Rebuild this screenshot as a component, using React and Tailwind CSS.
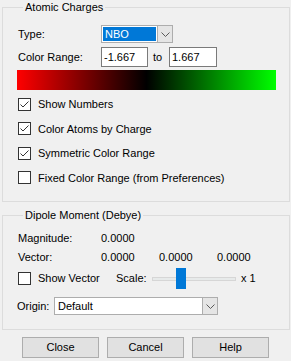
import React from 'react';

const Check = ({ checked }) => (
    <div className="w-[13px] h-[13px] border border-[#333333] bg-white shrink-0">
        {checked && (
            <svg width="11" height="11" viewBox="0 0 11 11">
                <polyline points="1.5,5.5 4,8 9.5,2.5" fill="none" stroke="#333333" strokeWidth="1" />
            </svg>
        )}
    </div>
);

const Chevron = () => (
    <svg width="9" height="5" viewBox="0 0 9 5">
        <polyline points="0.5,0.5 4.5,4.5 8.5,0.5" fill="none" stroke="#5a5a5a" strokeWidth="1" />
    </svg>
);

const CheckRow = ({ checked, label }) => (
    <div className="h-[24.5px] flex items-center gap-[7px]">
        <Check checked={checked} />
        <span>{label}</span>
    </div>
);

const App = () => {
    return (
        <div className="w-[291px] h-[361px] bg-[#f0f0f0] text-black text-[11px] pl-[2px] pr-[1px] overflow-hidden" style={{ fontFamily: '"Liberation Sans", Arial, sans-serif' }}>
            {/* Atomic Charges */}
            <fieldset className="border border-[#dcdcdc] pl-[15px] pb-[11px]">
                <legend className="ml-[5px] px-[2px] leading-[14px]">Atomic Charges</legend>

                <div className="pt-[11px] flex items-center h-[18px] box-content">
                    <span className="w-[83px]">Type:</span>
                    <div className="w-[72px] h-[18px] flex border border-[#adadad] bg-white">
                        <div className="flex-1 m-[1px] bg-[#0078d7] text-white flex items-center pl-[2px]">NBO</div>
                        <div className="w-[15px] bg-[#e5e5e5] border-l border-[#adadad] flex items-center justify-center">
                            <Chevron />
                        </div>
                    </div>
                </div>

                <div className="mt-[4px] flex items-center h-[20px]">
                    <span className="w-[83px]">Color Range:</span>
                    <div className="w-[47px] h-[20px] border border-[#7a7a7a] bg-white flex items-center pl-[2px]">-1.667</div>
                    <span className="ml-[5px] w-[16px]">to</span>
                    <div className="w-[48px] h-[20px] border border-[#7a7a7a] bg-white flex items-center pl-[2px]">1.667</div>
                </div>

                <div className="mt-[3px] -ml-[1px] w-[259px] h-[20px] bg-[linear-gradient(to_right,#ff0000,#000000_50%,#00ff00)]" />

                <div className="mt-[2px]">
                    <CheckRow checked label="Show Numbers" />
                    <CheckRow checked label="Color Atoms by Charge" />
                    <CheckRow checked label="Symmetric Color Range" />
                    <CheckRow label="Fixed Color Range (from Preferences)" />
                </div>
            </fieldset>

            {/* Dipole Moment */}
            <fieldset className="mt-[6px] border border-[#dcdcdc] pl-[15px] pb-[14px]">
                <legend className="ml-[5px] px-[2px] leading-[14px]">Dipole Moment (Debye)</legend>

                <div className="pt-[7px]">
                    <div className="h-[19px] flex items-center">
                        <span className="w-[83px]">Magnitude:</span>
                        <span>0.0000</span>
                    </div>
                    <div className="h-[19px] flex items-center">
                        <span className="w-[83px]">Vector:</span>
                        <span className="w-[58px]">0.0000</span>
                        <span className="w-[58px]">0.0000</span>
                        <span>0.0000</span>
                    </div>
                    <div className="h-[23px] flex items-center">
                        <Check />
                        <span className="ml-[7px] w-[78px]">Show Vector</span>
                        <span className="w-[36px]">Scale:</span>
                        <div className="relative w-[84px] h-[21px] flex items-center">
                            <div className="w-full h-[4px] bg-[#e7eaea] border border-[#d6d6d6]" />
                            <div className="absolute left-[24px] top-0 w-[10px] h-[21px] bg-[#0078d7]" />
                        </div>
                        <span className="ml-[5px]">x 1</span>
                    </div>
                    <div className="mt-[7px] flex items-center h-[18px]">
                        <span className="w-[37px] -ml-[1px]">Origin:</span>
                        <div className="w-[164px] h-[18px] flex border border-[#adadad] bg-white">
                            <div className="flex-1 flex items-center pl-[3px]">Default</div>
                            <div className="w-[15px] bg-[#e5e5e5] border-l border-[#adadad] flex items-center justify-center">
                                <Chevron />
                            </div>
                        </div>
                    </div>
                </div>
            </fieldset>

            {/* Buttons */}
            <div className="mt-[7px] flex justify-center gap-[8px] pr-[1px]">
                <button className="w-[77px] h-[21px] bg-[#e1e1e1] border border-[#adadad]">Close</button>
                <button className="w-[77px] h-[21px] bg-[#e1e1e1] border border-[#adadad]">Cancel</button>
                <button className="w-[77px] h-[21px] bg-[#e1e1e1] border border-[#adadad]">Help</button>
            </div>
        </div>
    );
};

export default App;
